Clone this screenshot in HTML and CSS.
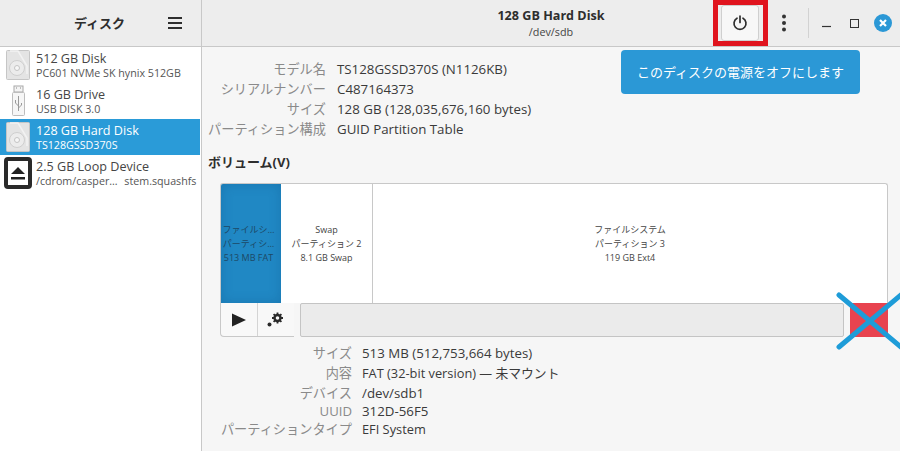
FILE: index.html
```html
<!DOCTYPE html>
<html lang="ja">
<head>
<meta charset="utf-8">
<title>ディスク</title>
<link rel="stylesheet" href="styles.css">
</head>
<body>
<div class="window">
  <aside class="sidebar">
    <header class="side-head">
      <span class="side-title">ディスク</span>
      <svg class="menu-icon" width="16" height="14" viewBox="0 0 16 14"><path d="M1 2h14M1 7h14M1 12h14" stroke="#2e2e2e" stroke-width="2"/></svg>
    </header>
    <ul class="disk-list">
      <li class="disk">
        <svg class="disk-icon" width="24" height="30" viewBox="0 0 24 30"><rect x=".5" y=".5" width="23" height="29" rx="1" fill="#e4e4e4" stroke="#c6c6c6"/><path d="M4 1 L12 1 L21 16 L21 24" fill="none" stroke="#f2f2f2" stroke-width="1.5"/><circle cx="11" cy="18" r="7.5" fill="#ececec" stroke="#cfcfcf"/><circle cx="11" cy="18" r="2.5" fill="#f7f7f7" stroke="#c4c4c4"/></svg>
        <div class="disk-text"><div class="disk-name">512 GB Disk</div><div class="disk-sub">PC601 NVMe SK hynix 512GB</div></div>
      </li>
      <li class="disk">
        <svg class="disk-icon" width="24" height="32" viewBox="0 0 24 32"><rect x="8" y="1" width="9" height="6" fill="#f4f4f4" stroke="#a8a8a8"/><path d="M10 3h1M14 3h1" stroke="#888"/><rect x="6.500" y="7.500" width="12" height="23" rx="1" fill="#f6f6f6" stroke="#bdbdbd"/><path d="M12.500 11v15M12.500 21l-3-3v-3M12.500 23l3-3v-2" fill="none" stroke="#9a9a9a"/></svg>
        <div class="disk-text"><div class="disk-name">16 GB Drive</div><div class="disk-sub">USB DISK 3.0</div></div>
      </li>
      <li class="disk selected">
        <svg class="disk-icon" width="24" height="30" viewBox="0 0 24 30"><rect x=".5" y=".5" width="23" height="29" rx="1" fill="#e4e4e4" stroke="#c6c6c6"/><path d="M4 1 L12 1 L21 16 L21 24" fill="none" stroke="#f2f2f2" stroke-width="1.5"/><circle cx="11" cy="18" r="7.5" fill="#ececec" stroke="#cfcfcf"/><circle cx="11" cy="18" r="2.5" fill="#f7f7f7" stroke="#c4c4c4"/></svg>
        <div class="disk-text"><div class="disk-name">128 GB Hard Disk</div><div class="disk-sub">TS128GSSD370S</div></div>
      </li>
      <li class="disk">
        <span class="eject-badge">
          <svg width="16" height="14" viewBox="0 0 16 14"><path d="M8 1l7 7H1z M1 11h14v2.500H1z" fill="#222"/></svg>
        </span>
        <div class="disk-text"><div class="disk-name">2.5 GB Loop Device</div><div class="disk-sub loop-path">/cdrom/casper… stem.squashfs</div></div>
      </li>
    </ul>
  </aside>
  <main class="main">
    <header class="main-head">
      <div class="title-box">
        <div class="main-title">128 GB Hard Disk</div>
        <div class="main-sub">/dev/sdb</div>
      </div>
      <div class="head-actions">
        <button class="power-btn" type="button" aria-label="電源オフ">
          <svg width="16" height="16" viewBox="0 0 16 16"><path d="M5 3.200a6 6 0 1 0 6 0M8 1v6.500" fill="none" stroke="#2e2e2e" stroke-width="1.700" stroke-linecap="round"/></svg>
        </button>
        <svg class="dots" width="6" height="18" viewBox="0 0 6 18"><circle cx="3" cy="2.500" r="2" fill="#333"/><circle cx="3" cy="9" r="2" fill="#333"/><circle cx="3" cy="15.500" r="2" fill="#333"/></svg>
        <span class="head-sep"></span>
        <svg class="win-min" width="9" height="3" viewBox="0 0 9 3"><path d="M0 1.500h9" stroke="#333" stroke-width="1.200"/></svg>
        <svg class="win-max" width="9" height="9" viewBox="0 0 9 9"><rect x=".5" y=".5" width="8" height="8" fill="none" stroke="#333"/></svg>
        <svg class="win-close" width="18" height="18" viewBox="0 0 18 18"><circle cx="9" cy="9" r="9" fill="#2b98d6"/><path d="M6 6l6 6M12 6l-6 6" stroke="#fff" stroke-width="2.200"/></svg>
      </div>
    </header>
    <section class="content">
      <dl class="props props-top">
        <dt>モデル名</dt><dd>TS128GSSD370S (N1126KB)</dd>
        <dt>シリアルナンバー</dt><dd>C487164373</dd>
        <dt>サイズ</dt><dd>128 GB (128,035,676,160 bytes)</dd>
        <dt>パーティション構成</dt><dd>GUID Partition Table</dd>
      </dl>
      <h2 class="vol-title">ボリューム(V)</h2>
      <div class="volumes">
        <div class="bar">
          <div class="part part-1"><span>ファイルシ…</span><span>パーティシ…</span><span>513 MB FAT</span></div>
          <div class="part part-2"><span>Swap</span><span>パーティション 2</span><span>8.1 GB Swap</span></div>
          <div class="part part-3"><span>ファイルシステム</span><span>パーティション 3</span><span>119 GB Ext4</span></div>
        </div>
        <div class="vol-tools">
          <div class="tool-group">
            <button class="tool" type="button" aria-label="マウント"><svg width="14" height="14" viewBox="0 0 14 14"><path d="M0 .5l14 6.500L0 13.500z" fill="#222"/></svg></button>
            <button class="tool" type="button" aria-label="設定"><svg width="17" height="15" viewBox="0 0 17 15"><g fill="none" stroke="#2a2a2a"><circle cx="10.500" cy="6" r="3" stroke-width="2.400"/><path d="M10.500 .5v2M10.500 9.500v2M5 6h2M14 6h2M6.600 2.100l1.500 1.500M12.900 8.400l1.500 1.500M14.400 2.100l-1.500 1.500M8.100 8.400l-1.500 1.500" stroke-width="1.800"/></g><circle cx="2.500" cy="12.500" r="2" fill="#2a2a2a"/></svg></button>
          </div>
          <div class="progress"></div>
          <div class="red-btn"></div>
        </div>
      </div>
      <dl class="props props-bottom">
        <dt>サイズ</dt><dd>513 MB (512,753,664 bytes)</dd>
        <dt>内容</dt><dd class="tight">FAT (32-bit version) — 未マウント</dd>
        <dt>デバイス</dt><dd>/dev/sdb1</dd>
        <dt>UUID</dt><dd>312D-56F5</dd>
        <dt>パーティションタイプ</dt><dd class="tight">EFI System</dd>
      </dl>
    </section>
  </main>
</div>
<div class="tooltip">このディスクの電源をオフにします</div>
<div class="red-frame"></div>
<svg class="cross" width="66" height="58" viewBox="0 0 66 58"><path d="M3 3L66 56M3 55L66 2" stroke="#1e9cd8" stroke-width="5" stroke-linecap="round" fill="none"/></svg>
</body>
</html>
```
FILE: styles.css
```css
* { box-sizing: border-box; }
html, body { margin: 0; padding: 0; height: 100%; }
body {
  position: relative;
  width: 900px;
  height: 451px;
  overflow: hidden;
  font-family: "Open Sans", "Noto Sans CJK JP", sans-serif;
  font-size: 13px;
  color: #3a3a3a;
  background: #f6f6f6;
}
.window { display: flex; width: 900px; height: 451px; }

/* sidebar */
.sidebar { width: 202px; flex: none; background: #fff; border-right: 1px solid #c8c8c8; }
.side-head {
  height: 47px;
  background: #ededed;
  border-bottom: 1px solid #c8c8c8;
  display: flex;
  align-items: center;
  padding-left: 74px;
}
.side-title { font-size: 13px; font-weight: 700; color: #2e2e2e; width: 93px; margin-top: -1px; }
.menu-icon { margin-top: -1px; }
.disk-list { list-style: none; margin: 0; padding: 0; }
.disk { height: 36px; display: flex; align-items: center; padding-left: 6px; }
.disk-icon { flex: none; width: 24px; margin-right: 6px; }
.disk-text { min-width: 0; }
.disk-name { font-size: 12.6px; line-height: 17px; color: #454545; white-space: nowrap; }
.disk-sub { font-size: 10.7px; line-height: 13px; color: #555; white-space: nowrap; }
.loop-path { word-spacing: 4px; }
.selected { background: #2a9bd8; width: 200px; }
.selected .disk-name, .selected .disk-sub { color: #fff; }
.eject-badge {
  flex: none;
  width: 28px;
  height: 32px;
  margin: 0 4px 0 -2px;
  border: 4px solid #2a2a2a;
  border-radius: 4px;
  background: #fff;
  display: flex;
  align-items: center;
  justify-content: center;
}

/* main */
.main { flex: 1; min-width: 0; display: flex; flex-direction: column; }
.main-head {
  height: 47px;
  flex: none;
  background: #ededed;
  border-bottom: 1px solid #c8c8c8;
  display: flex;
  align-items: center;
}
.title-box { width: 698px; text-align: center; }
.main-title { font-size: 12.6px; font-weight: 700; line-height: 16px; color: #2e2e2e; }
.main-sub { font-size: 10.8px; line-height: 14px; margin-top: 1px; color: #444; }
.head-actions { flex: 1; display: flex; align-items: center; margin-left: -179px; }
.power-btn {
  width: 38px;
  height: 36px;
  padding: 0;
  border: 1px solid #cfcfcf;
  border-radius: 3px;
  background: #f7f7f7;
  display: flex;
  align-items: center;
  justify-content: center;
}
.dots { margin-left: 22px; }
.head-sep { width: 1px; height: 30px; background: #d2d2d2; margin-left: 21px; }
.win-min { margin-left: 13px; margin-top: 7px; }
.win-max { margin-left: 19px; }
.win-close { margin-left: 15px; }

/* content */
.content { flex: 1; padding: 12px 12px 0 6px; }
.props { display: grid; margin: 0; }
.props dt { text-align: right; color: #8a8a8a; font-size: 13.2px; white-space: nowrap; }
.props dd { margin: 0; color: #3a3a3a; font-size: 13.3px; white-space: nowrap; }
.props dd.tight { font-size: 12.8px; }
.props-top { grid-template-columns: 118px 1fr; column-gap: 11px; grid-auto-rows: 20px; line-height: 20px; }
.vol-title { margin: 15px 0 0; font-size: 13px; line-height: 17px; font-weight: 700; color: #2e2e2e; }
.volumes { margin: 12px 0 0 12px; width: 668px; }
.bar {
  display: flex;
  height: 120px;
  border: 1px solid #c8c8c8;
  border-bottom: 0;
  border-radius: 3px 3px 0 0;
  background: #fff;
}
.part {
  display: flex;
  flex-direction: column;
  align-items: center;
  justify-content: center;
  font-size: 9px;
  line-height: 14px;
  color: #444;
  white-space: nowrap;
  overflow: hidden;
}
.part-1 {
  width: 60px;
  padding-right: 5px;
  background: #2088c4;
  color: #1d4866;
  box-shadow: inset 0 0 12px rgba(0, 60, 110, .22);
  border-radius: 2px 0 0 0;
}
.part-2 { width: 92px; border-right: 1px solid #c8c8c8; }
.part-3 { flex: 1; }
.vol-tools { display: flex; height: 34px; }
.tool-group {
  display: flex;
  width: 74px;
  height: 34px;
  flex: none;
  background: #f8f8f8;
  border: 1px solid #c8c8c8;
  border-top: 0;
  border-right: 0;
  border-radius: 0 0 0 4px;
}
.tool {
  width: 37px;
  padding: 0;
  border: 0;
  border-right: 1px solid #d4d4d4;
  background: transparent;
  display: flex;
  align-items: center;
  justify-content: center;
}
.tool:last-child { border-right: 0; }
.progress {
  width: 544px;
  height: 34px;
  margin-left: 6px;
  background: #ebebeb;
  border: 1px solid #c4c4c4;
  border-radius: 2px;
}
.red-btn { width: 38px; height: 34px; margin-left: 6px; background: #e8434f; }
.props-bottom {
  grid-template-columns: 144px 1fr;
  grid-template-rows: 20px 20px 18px 18px 18px;
  line-height: 18px;
  margin-top: 7px;
  column-gap: 10px;
}

/* overlays */
.tooltip {
  position: absolute;
  left: 621px;
  top: 50px;
  width: 239px;
  height: 44px;
  border-radius: 4px;
  background: #2b98d6;
  color: #fff;
  font-size: 13px;
  line-height: 44px;
  text-align: center;
}
.red-frame {
  position: absolute;
  left: 713px;
  top: 0;
  width: 55px;
  height: 46px;
  border: 5px solid #e0141e;
}
.cross { position: absolute; left: 836px; top: 292px; }
```
